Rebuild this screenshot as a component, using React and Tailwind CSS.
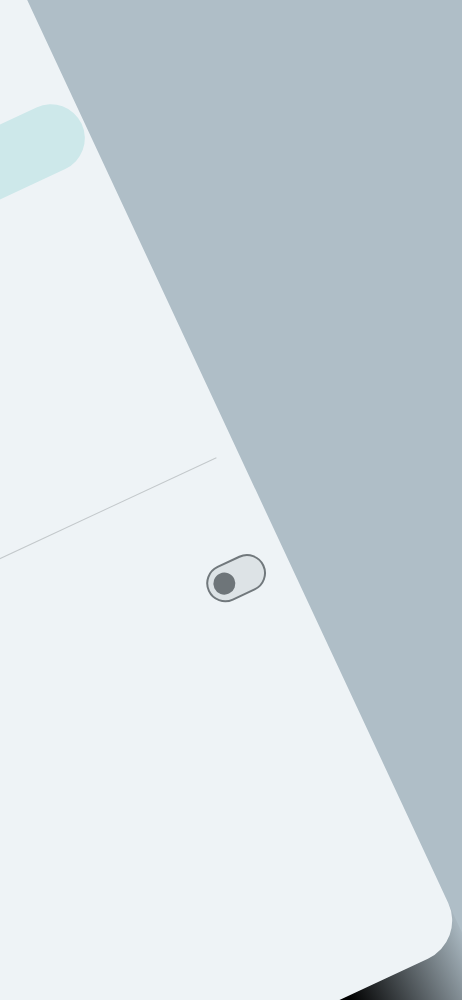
export default function App() {
  return (
    <div className="relative w-[462px] h-[1000px] overflow-hidden bg-[#afbec7]">
      {/* tilted device: panel + dark edge below, rotated around the panel's bottom-right corner */}
      <div className="absolute left-[-434px] top-[-459px] w-[900px] flex flex-col origin-[900px_1400px] rotate-[-25deg]">
        <div className="relative z-10 h-[1400px] rounded-[42px] bg-[linear-gradient(115deg,#e8f3f0_0%,#eef3f6_48%)] flex flex-col pt-[463px]">
          {/* active item pill */}
          <div className="self-end mr-[3px] w-[420px] h-[68px] rounded-full bg-[#cde8ea]" />

          {/* divider */}
          <div className="mt-[325px] mr-[22px] h-px bg-[#c3c8cb]" />

          {/* switch */}
          <div className="self-end mt-[98px] mr-[24px] w-[62px] h-[38px] rounded-full border-[2.5px] border-[#71787c] bg-[#dde3e6] flex items-center pl-[5px]">
            <div className="w-[22px] h-[22px] rounded-full bg-[#6e7579]" />
          </div>
        </div>
        <div className="-mt-[60px] h-[140px] rounded-br-[42px] bg-[linear-gradient(to_right,#000_770px,#afbec7_905px)]" />
      </div>
    </div>
  )
}
